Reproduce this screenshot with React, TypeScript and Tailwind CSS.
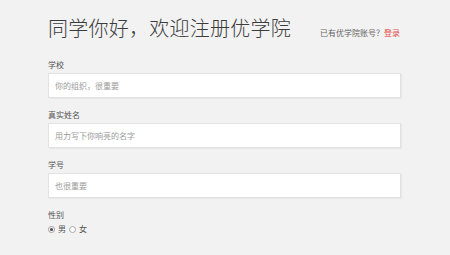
const fields = [
  { label: "学校", placeholder: "你的组织，很重要" },
  { label: "真实姓名", placeholder: "用力写下你响亮的名字" },
  { label: "学号", placeholder: "也很重要" },
];

export default function App() {
  return (
    <div
      className="w-[450px] h-[255px] bg-[#f2f2f2] pl-[48px] pt-[14px] overflow-hidden"
      style={{ fontFamily: '"Noto Sans CJK SC", "Noto Sans", sans-serif' }}
    >
      <div className="flex items-end h-[28px] mb-[17px]">
        <h1 className="text-[20px] leading-[28px] tracking-[0.25px] font-light text-[#3c3c3c]">
          同学你好，欢迎注册优学院
        </h1>
        <p className="ml-[29px] mb-[4px] text-[8px] leading-[10px] text-[#666]">
          已有优学院账号？<span className="text-[#e0504a]">登录</span>
        </p>
      </div>

      {fields.map((f) => (
        <div key={f.label} className="mb-[11px]">
          <label className="block text-[8px] leading-[12px] text-[#555] mb-[2px]">{f.label}</label>
          <input
            placeholder={f.placeholder}
            className="block w-[353px] h-[25px] bg-white border border-[#e2e2e2] shadow-[1px_1px_1px_rgba(0,0,0,0.04)] px-[6px] text-[8px] text-[#333] placeholder:text-[#9a9a9a] outline-none"
          />
        </div>
      ))}

      <div>
        <label className="block text-[8px] leading-[12px] text-[#555]">性别</label>
        <div className="flex items-center h-[16px] text-[8px] text-[#555]">
          <span className="w-[7px] h-[7px] rounded-full border border-[#999] bg-white flex items-center justify-center">
            <span className="w-[3px] h-[3px] rounded-full bg-[#444]" />
          </span>
          <span className="ml-[3px]">男</span>
          <span className="ml-[3px] w-[7px] h-[7px] rounded-full border border-[#aaa] bg-white" />
          <span className="ml-[3px]">女</span>
        </div>
      </div>
    </div>
  );
}
